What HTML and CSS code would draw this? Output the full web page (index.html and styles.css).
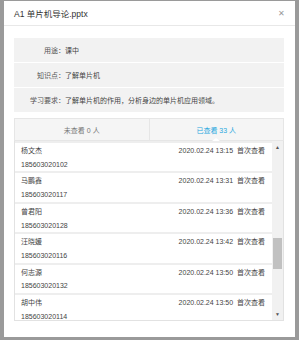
FILE: index.html
```html
<!DOCTYPE html>
<html lang="zh-CN">
<head>
  <meta charset="UTF-8" />
  <title>A1 单片机导论.pptx</title>
  <link rel="stylesheet" href="styles.css">
</head>
<body>

  <div class="modal">
    <div class="modal-head">
      <span class="title">A1 单片机导论.pptx</span>
      <span class="close">✕</span>
    </div>

    <div class="modal-body">
      <div class="info">
        <div class="info-row"><span class="label">用途：</span><span>课中</span></div>
        <div class="info-row"><span class="label">知识点：</span><span>了解单片机</span></div>
        <div class="info-row"><span class="label">学习要求：</span><span>了解单片机的作用，分析身边的单片机应用领域。</span></div>
      </div>

      <div class="tabs">
        <div class="tab">未查看 0 人</div>
        <div class="tab active">已查看 33 人</div>
      </div>

      <div class="list-wrap">
        <div class="list">
          <div class="item">
            <div class="line"><span>杨文杰</span><span>2020.02.24 13:15&nbsp; 首次查看</span></div>
            <div class="line">185603020102</div>
          </div>
          <div class="item">
            <div class="line"><span>马鹏鑫</span><span>2020.02.24 13:31&nbsp; 首次查看</span></div>
            <div class="line">185603020117</div>
          </div>
          <div class="item">
            <div class="line"><span>曾君阳</span><span>2020.02.24 13:36&nbsp; 首次查看</span></div>
            <div class="line">185603020128</div>
          </div>
          <div class="item">
            <div class="line"><span>汪晓媛</span><span>2020.02.24 13:42&nbsp; 首次查看</span></div>
            <div class="line">185603020116</div>
          </div>
          <div class="item">
            <div class="line"><span>何志源</span><span>2020.02.24 13:50&nbsp; 首次查看</span></div>
            <div class="line">185603020132</div>
          </div>
          <div class="item">
            <div class="line"><span>胡中伟</span><span>2020.02.24 13:50&nbsp; 首次查看</span></div>
            <div class="line">185603020114</div>
          </div>
        </div>
        <div class="scrollbar">
          <span class="arrow">▲</span>
          <span class="thumb"></span>
          <span class="arrow down">▼</span>
        </div>
      </div>
    </div>
  </div>

</body>
</html>
```

FILE: styles.css
```css
body {
  margin: 0;
  background: #9a9a9a;
  font-family: "Liberation Sans", "Noto Sans CJK SC", sans-serif;
  font-size: 7px;
  color: #444;
}
.modal {
  margin: 1px 0 0 4px;
  width: 291px;
  height: 336px;
  background: #fff;
}
.modal-head {
  height: 24px;
  display: flex;
  align-items: center;
  justify-content: space-between;
  padding: 0 10px 0 10px;
  border-bottom: 1px solid #e8e8e8;
}
.title {
  font-size: 8.5px;
  color: #333;
}
.close {
  font-size: 8px;
  color: #999;
}
.modal-body {
  padding: 12px 11px 0 10px;
}
.info {
  background: #f2f2f2;
}
.info-row {
  height: 24px;
  display: flex;
  align-items: center;
  border-bottom: 1px solid #fff;
  color: #444;
}
.info-row:last-child {
  border-bottom: none;
}
.info-row .label {
  width: 51px;
  text-align: right;
  color: #555;
}
.tabs {
  margin-top: 6px;
  display: flex;
  height: 23px;
  background: #f5f5f5;
  border: 1px solid #e6e6e6;
  box-sizing: border-box;
}
.tab {
  flex: 1;
  display: flex;
  align-items: center;
  justify-content: center;
  color: #777;
  position: relative;
}
.tab + .tab {
  border-left: 1px solid #e6e6e6;
}
.tab.active {
  color: #2aa8df;
}
.tab.active::after {
  content: "";
  position: absolute;
  bottom: -1px;
  left: 50%;
  margin-left: -4px;
  border: 4px solid transparent;
  border-bottom: 3px solid #fff;
  border-top: none;
}
.list-wrap {
  display: flex;
  height: 180px;
  border: 1px solid #e2e2e2;
  border-top: none;
  box-sizing: border-box;
  background: #eee;
}
.list {
  flex: 1;
  overflow: hidden;
  padding-top: 2px;
}
.item {
  background: #fff;
  height: 28.4px;
  padding: 0 7px 0 6px;
  margin-bottom: 2px;
}
.line {
  height: 14.2px;
  display: flex;
  align-items: center;
  justify-content: space-between;
  color: #444;
}
.scrollbar {
  width: 11px;
  background: #f1f1f1;
  display: flex;
  flex-direction: column;
  align-items: center;
}
.arrow {
  font-size: 5px;
  color: #555;
  height: 12px;
  line-height: 12px;
}
.thumb {
  width: 9px;
  height: 31px;
  margin-top: 85px;
  background: #c1c1c1;
}
.arrow.down {
  margin-top: auto;
}
```
